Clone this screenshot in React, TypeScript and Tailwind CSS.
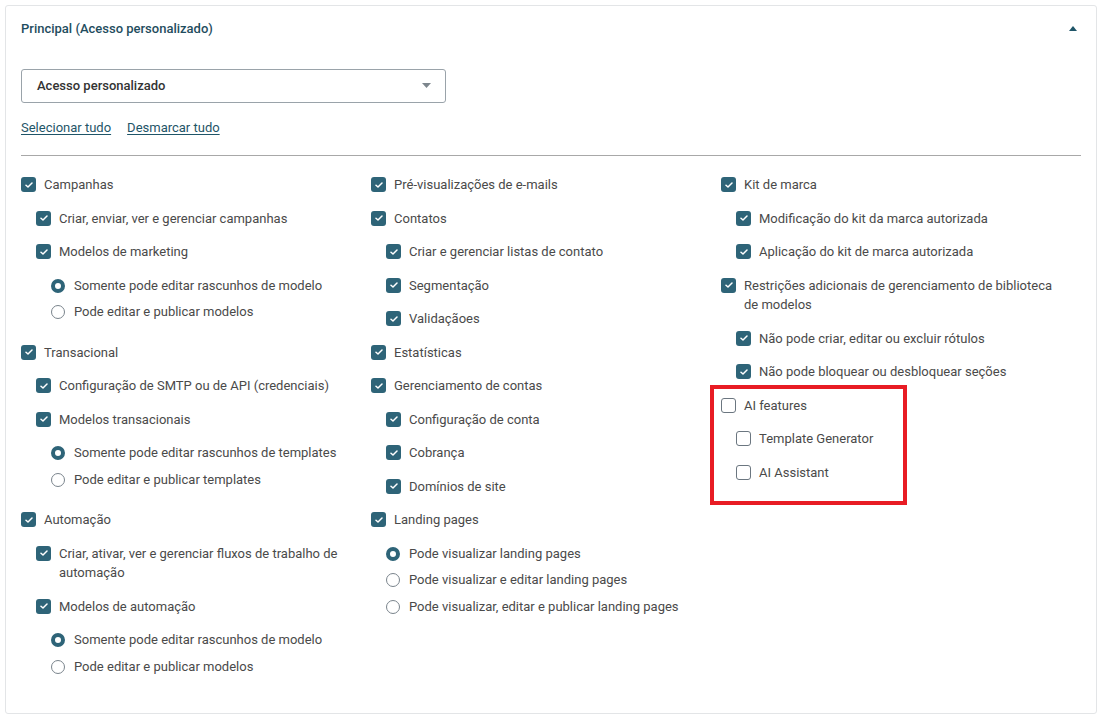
import type { ReactNode } from 'react'

type Node =
  | { kind: 'check'; label: string; checked: boolean; children?: Node[] }
  | { kind: 'radios'; options: string[]; selected: number }

const col1: Node[] = [
  {
    kind: 'check',
    label: 'Campanhas',
    checked: true,
    children: [
      { kind: 'check', label: 'Criar, enviar, ver e gerenciar campanhas', checked: true },
      {
        kind: 'check',
        label: 'Modelos de marketing',
        checked: true,
        children: [
          { kind: 'radios', options: ['Somente pode editar rascunhos de modelo', 'Pode editar e publicar modelos'], selected: 0 },
        ],
      },
    ],
  },
  {
    kind: 'check',
    label: 'Transacional',
    checked: true,
    children: [
      { kind: 'check', label: 'Configuração de SMTP ou de API (credenciais)', checked: true },
      {
        kind: 'check',
        label: 'Modelos transacionais',
        checked: true,
        children: [
          { kind: 'radios', options: ['Somente pode editar rascunhos de templates', 'Pode editar e publicar templates'], selected: 0 },
        ],
      },
    ],
  },
  {
    kind: 'check',
    label: 'Automação',
    checked: true,
    children: [
      { kind: 'check', label: 'Criar, ativar, ver e gerenciar fluxos de trabalho de automação', checked: true },
      {
        kind: 'check',
        label: 'Modelos de automação',
        checked: true,
        children: [
          { kind: 'radios', options: ['Somente pode editar rascunhos de modelo', 'Pode editar e publicar modelos'], selected: 0 },
        ],
      },
    ],
  },
]

const col2: Node[] = [
  { kind: 'check', label: 'Pré-visualizações de e-mails', checked: true },
  {
    kind: 'check',
    label: 'Contatos',
    checked: true,
    children: [
      { kind: 'check', label: 'Criar e gerenciar listas de contato', checked: true },
      { kind: 'check', label: 'Segmentação', checked: true },
      { kind: 'check', label: 'Validaçãoes', checked: true },
    ],
  },
  { kind: 'check', label: 'Estatísticas', checked: true },
  {
    kind: 'check',
    label: 'Gerenciamento de contas',
    checked: true,
    children: [
      { kind: 'check', label: 'Configuração de conta', checked: true },
      { kind: 'check', label: 'Cobrança', checked: true },
      { kind: 'check', label: 'Domínios de site', checked: true },
    ],
  },
  {
    kind: 'check',
    label: 'Landing pages',
    checked: true,
    children: [
      {
        kind: 'radios',
        options: ['Pode visualizar landing pages', 'Pode visualizar e editar landing pages', 'Pode visualizar, editar e publicar landing pages'],
        selected: 0,
      },
    ],
  },
]

const col3: Node[] = [
  {
    kind: 'check',
    label: 'Kit de marca',
    checked: true,
    children: [
      { kind: 'check', label: 'Modificação do kit da marca autorizada', checked: true },
      { kind: 'check', label: 'Aplicação do kit de marca autorizada', checked: true },
    ],
  },
  {
    kind: 'check',
    label: 'Restrições adicionais de gerenciamento de biblioteca de modelos',
    checked: true,
    children: [
      { kind: 'check', label: 'Não pode criar, editar ou excluir rótulos', checked: true },
      { kind: 'check', label: 'Não pode bloquear ou desbloquear seções', checked: true },
    ],
  },
]

const aiGroup: Node = {
  kind: 'check',
  label: 'AI features',
  checked: false,
  children: [
    { kind: 'check', label: 'Template Generator', checked: false },
    { kind: 'check', label: 'AI Assistant', checked: false },
  ],
}

function Checkbox({ checked }: { checked: boolean }) {
  if (!checked) {
    return <span className="mt-[2px] h-[15px] w-[15px] shrink-0 rounded-[3px] border border-[#6b7680] bg-white" />
  }
  return (
    <span className="mt-[2px] flex h-[15px] w-[15px] shrink-0 items-center justify-center rounded-[3px] bg-[#2e6478]">
      <svg width="8" height="6" viewBox="0 0 8 6" fill="none">
        <path d="M1 3.2 3 5 7 1" stroke="white" strokeWidth="1.5" strokeLinecap="round" strokeLinejoin="round" />
      </svg>
    </span>
  )
}

function Radio({ on }: { on: boolean }) {
  return on ? (
    <span className="mt-[3px] h-[14px] w-[14px] shrink-0 rounded-full border-[4px] border-[#2e6478] bg-white" />
  ) : (
    <span className="mt-[3px] h-[14px] w-[14px] shrink-0 rounded-full border border-[#7a848c] bg-white" />
  )
}

function Item({ node, first }: { node: Node; first: boolean }) {
  if (node.kind === 'radios') {
    return (
      <div className={`${first ? '' : 'mt-[14px]'} pb-[7px]`}>
        {node.options.map((o, i) => (
          <div key={o} className={`flex gap-[9px] ${i === 0 ? 'mt-[14px]' : 'mt-[7px]'}`}>
            <Radio on={i === node.selected} />
            <span>{o}</span>
          </div>
        ))}
      </div>
    )
  }
  return (
    <div className={first ? '' : 'mt-[14px]'}>
      <div className="flex gap-[8px]">
        <Checkbox checked={node.checked} />
        <span>{node.label}</span>
      </div>
      {node.children && (
        <div className="pl-[15px]">
          {node.children.map((c, i) => (
            <Item key={i} node={c} first={c.kind === 'radios'} />
          ))}
        </div>
      )}
    </div>
  )
}

function Column({ nodes, extra }: { nodes: Node[]; extra?: ReactNode }) {
  return (
    <div className="w-[350px] pr-[12px]">
      {nodes.map((n, i) => (
        <Item key={i} node={n} first={i === 0} />
      ))}
      {extra}
    </div>
  )
}

export default function App() {
  return (
    <div className="min-h-[717px] bg-white p-[5px] font-['Roboto',sans-serif] text-[13px] leading-[1.5] text-[#4a4a4a]">
      <div className="h-[709px] rounded-[3px] border border-[#e3e5e7] bg-white px-[15px]">
        {/* Header */}
        <div className="flex items-center justify-between pt-[13px]">
          <h2 className="text-[13px] font-medium text-[#1f4d5e]">Principal (Acesso personalizado)</h2>
          <svg width="8" height="5" viewBox="0 0 8 5" className="mr-[4px]">
            <path d="M0 5 4 0 8 5Z" fill="#1f5568" />
          </svg>
        </div>

        {/* Access select */}
        <div className="mt-[30px] flex h-[34px] w-[425px] items-center justify-between rounded-[3px] border border-[#9aa3aa] pl-[15px] pr-[14px]">
          <span className="font-medium text-[#333]">Acesso personalizado</span>
          <svg width="9" height="5" viewBox="0 0 9 5">
            <path d="M0 0h9L4.5 5Z" fill="#7d868d" />
          </svg>
        </div>

        <div className="mt-[15px] flex gap-[16px] text-[#1f5568]">
          <a className="underline underline-offset-2">Selecionar tudo</a>
          <a className="underline underline-offset-2">Desmarcar tudo</a>
        </div>

        <div className="mt-[18px] border-t border-[#a8a8a8]" />

        {/* Permissions */}
        <div className="mt-[19px] flex">
          <Column nodes={col1} />
          <Column nodes={col2} />
          <Column
            nodes={col3}
            extra={
              <div className="relative mt-[14px]">
                <Item node={aiGroup} first />
                <div className="pointer-events-none absolute left-[-11px] top-[-11px] h-[120px] w-[197px] border-[4px] border-[#e81c24]" />
              </div>
            }
          />
        </div>
      </div>
    </div>
  )
}
